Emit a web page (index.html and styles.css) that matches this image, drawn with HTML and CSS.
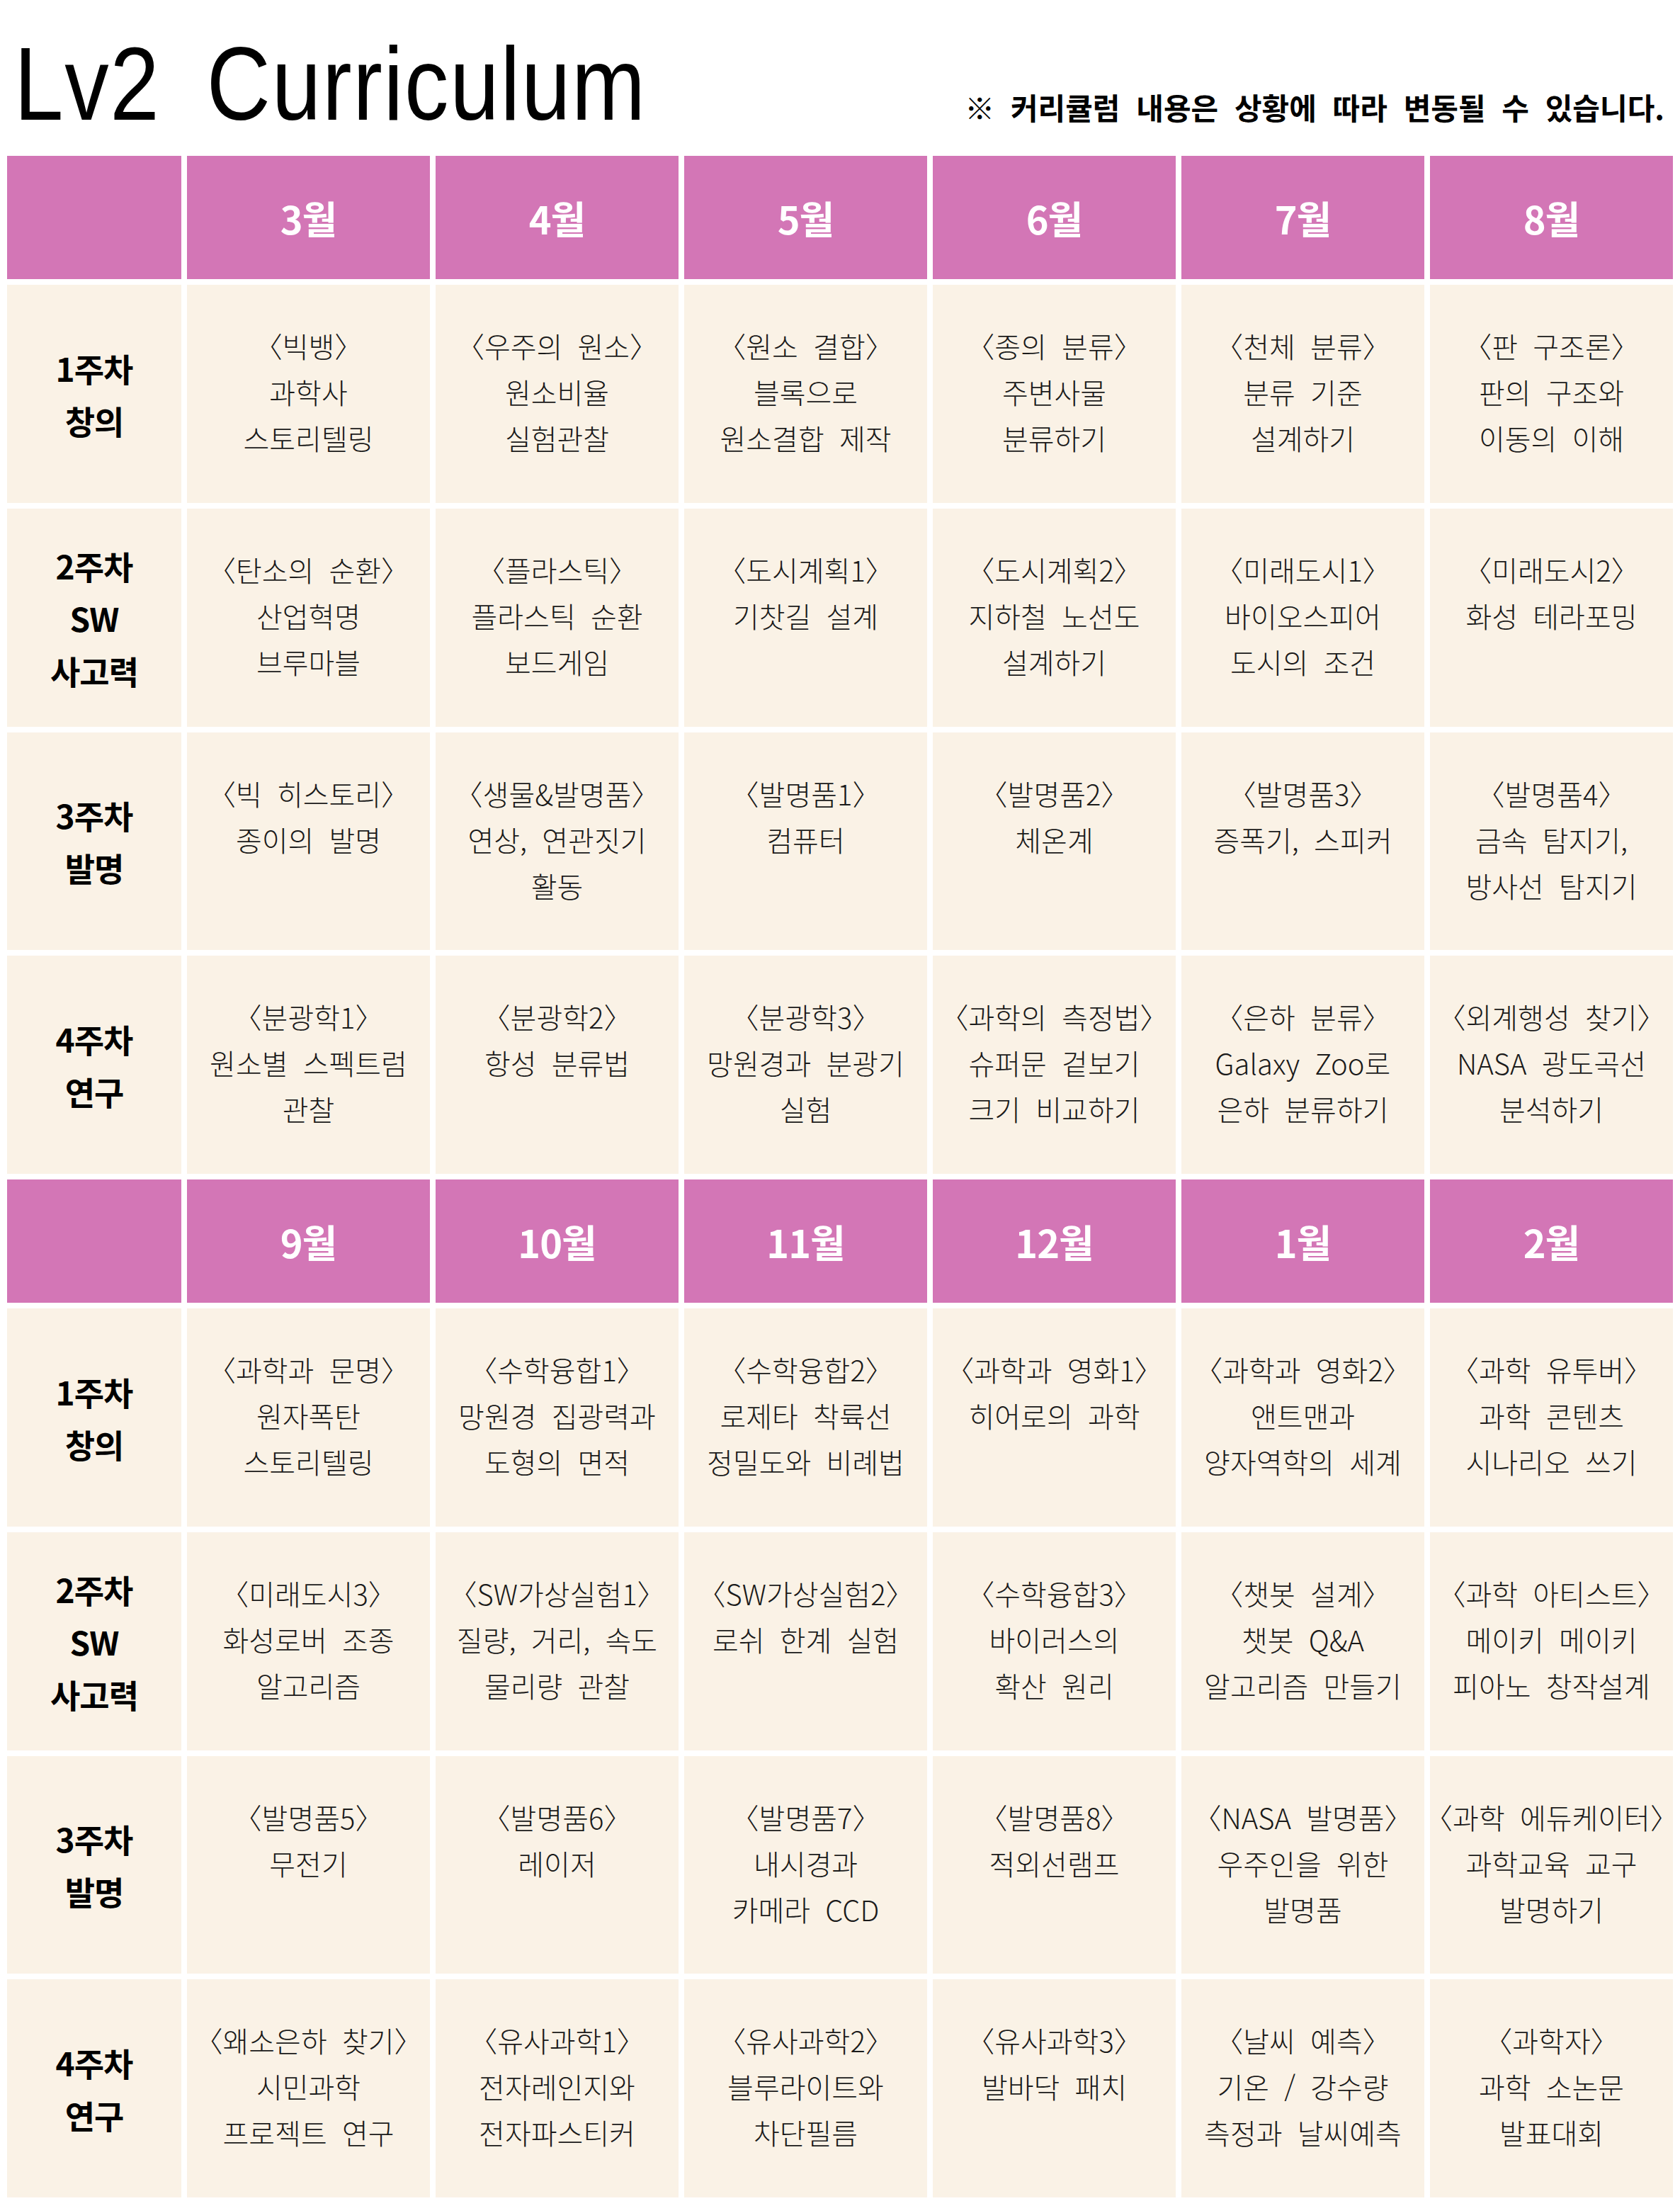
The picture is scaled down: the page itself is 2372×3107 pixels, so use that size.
FILE: index.html
```html
<!DOCTYPE html>
<html lang="ko">
<head>
<meta charset="utf-8">
<title>Lv2 Curriculum</title>
<link rel="stylesheet" href="styles.css">
</head>
<body>
<div class="page">
  <header class="top">
    <h1 class="title">Lv2 Curriculum</h1>
    <p class="note">※ 커리큘럼 내용은 상황에 따라 변동될 수 있습니다.</p>
  </header>
  <div class="grid">
    <div class="head"></div>
    <div class="head">3월</div>
    <div class="head">4월</div>
    <div class="head">5월</div>
    <div class="head">6월</div>
    <div class="head">7월</div>
    <div class="head">8월</div>

    <div class="week">1주차<br>창의</div>
    <div class="cell">〈빅뱅〉<br>과학사<br>스토리텔링</div>
    <div class="cell">〈우주의 원소〉<br>원소비율<br>실험관찰</div>
    <div class="cell">〈원소 결합〉<br>블록으로<br>원소결합 제작</div>
    <div class="cell">〈종의 분류〉<br>주변사물<br>분류하기</div>
    <div class="cell">〈천체 분류〉<br>분류 기준<br>설계하기</div>
    <div class="cell">〈판 구조론〉<br>판의 구조와<br>이동의 이해</div>

    <div class="week">2주차<br>SW<br>사고력</div>
    <div class="cell">〈탄소의 순환〉<br>산업혁명<br>브루마블</div>
    <div class="cell">〈플라스틱〉<br>플라스틱 순환<br>보드게임</div>
    <div class="cell">〈도시계획1〉<br>기찻길 설계</div>
    <div class="cell">〈도시계획2〉<br>지하철 노선도<br>설계하기</div>
    <div class="cell">〈미래도시1〉<br>바이오스피어<br>도시의 조건</div>
    <div class="cell">〈미래도시2〉<br>화성 테라포밍</div>

    <div class="week">3주차<br>발명</div>
    <div class="cell">〈빅 히스토리〉<br>종이의 발명</div>
    <div class="cell">〈생물&amp;발명품〉<br>연상, 연관짓기<br>활동</div>
    <div class="cell">〈발명품1〉<br>컴퓨터</div>
    <div class="cell">〈발명품2〉<br>체온계</div>
    <div class="cell">〈발명품3〉<br>증폭기, 스피커</div>
    <div class="cell">〈발명품4〉<br>금속 탐지기,<br>방사선 탐지기</div>

    <div class="week">4주차<br>연구</div>
    <div class="cell">〈분광학1〉<br>원소별 스펙트럼<br>관찰</div>
    <div class="cell">〈분광학2〉<br>항성 분류법</div>
    <div class="cell">〈분광학3〉<br>망원경과 분광기<br>실험</div>
    <div class="cell">〈과학의 측정법〉<br>슈퍼문 겉보기<br>크기 비교하기</div>
    <div class="cell">〈은하 분류〉<br>Galaxy Zoo로<br>은하 분류하기</div>
    <div class="cell">〈외계행성 찾기〉<br>NASA 광도곡선<br>분석하기</div>

    <div class="head"></div>
    <div class="head">9월</div>
    <div class="head">10월</div>
    <div class="head">11월</div>
    <div class="head">12월</div>
    <div class="head">1월</div>
    <div class="head">2월</div>

    <div class="week">1주차<br>창의</div>
    <div class="cell">〈과학과 문명〉<br>원자폭탄<br>스토리텔링</div>
    <div class="cell">〈수학융합1〉<br>망원경 집광력과<br>도형의 면적</div>
    <div class="cell">〈수학융합2〉<br>로제타 착륙선<br>정밀도와 비례법</div>
    <div class="cell">〈과학과 영화1〉<br>히어로의 과학</div>
    <div class="cell">〈과학과 영화2〉<br>앤트맨과<br>양자역학의 세계</div>
    <div class="cell">〈과학 유투버〉<br>과학 콘텐츠<br>시나리오 쓰기</div>

    <div class="week">2주차<br>SW<br>사고력</div>
    <div class="cell">〈미래도시3〉<br>화성로버 조종<br>알고리즘</div>
    <div class="cell">〈SW가상실험1〉<br>질량, 거리, 속도<br>물리량 관찰</div>
    <div class="cell">〈SW가상실험2〉<br>로쉬 한계 실험</div>
    <div class="cell">〈수학융합3〉<br>바이러스의<br>확산 원리</div>
    <div class="cell">〈챗봇 설계〉<br>챗봇 Q&amp;A<br>알고리즘 만들기</div>
    <div class="cell">〈과학 아티스트〉<br>메이키 메이키<br>피아노 창작설계</div>

    <div class="week">3주차<br>발명</div>
    <div class="cell">〈발명품5〉<br>무전기</div>
    <div class="cell">〈발명품6〉<br>레이저</div>
    <div class="cell">〈발명품7〉<br>내시경과<br>카메라 CCD</div>
    <div class="cell">〈발명품8〉<br>적외선램프</div>
    <div class="cell">〈NASA 발명품〉<br>우주인을 위한<br>발명품</div>
    <div class="cell">〈과학 에듀케이터〉<br>과학교육 교구<br>발명하기</div>

    <div class="week">4주차<br>연구</div>
    <div class="cell">〈왜소은하 찾기〉<br>시민과학<br>프로젝트 연구</div>
    <div class="cell">〈유사과학1〉<br>전자레인지와<br>전자파스티커</div>
    <div class="cell">〈유사과학2〉<br>블루라이트와<br>차단필름</div>
    <div class="cell">〈유사과학3〉<br>발바닥 패치</div>
    <div class="cell">〈날씨 예측〉<br>기온 / 강수량<br>측정과 날씨예측</div>
    <div class="cell">〈과학자〉<br>과학 소논문<br>발표대회</div>
  </div>
</div>
</body>
</html>
```

FILE: styles.css
```css
html, body {
  margin: 0;
  padding: 0;
  background: #ffffff;
}

.page {
  width: 2372px;
  padding: 0 10px;
  box-sizing: border-box;
}

.top {
  display: flex;
  justify-content: space-between;
  align-items: baseline;
  height: 220px;
  padding: 45px 12px 0 10px;
  box-sizing: border-box;
}

.title {
  margin: 0;
  font-family: "Liberation Sans", Arial, sans-serif;
  font-weight: 400;
  font-size: 147px;
  line-height: 147px;
  letter-spacing: 2px;
  word-spacing: 34px;
  color: #000;
  white-space: nowrap;
  transform: scaleX(0.85);
  transform-origin: left center;
}

.note {
  margin: 0;
  font-family: "Noto Sans CJK KR", "Noto Sans", sans-serif;
  font-weight: 700;
  font-size: 42px;
  word-spacing: 11px;
  color: #000;
}

.grid {
  display: grid;
  grid-template-columns: 246px repeat(6, 343px);
  grid-template-rows: 174px repeat(4, 307.75px) 174px repeat(4, 307.75px);
  gap: 8px;
}

.head {
  background: #d376b6;
  color: #ffffff;
  display: flex;
  align-items: center;
  justify-content: center;
  font-family: "Noto Sans CJK KR", "Noto Sans", sans-serif;
  font-weight: 700;
  font-size: 54px;
  letter-spacing: -1px;
}

.week {
  background: #faf2e6;
  display: flex;
  align-items: center;
  justify-content: center;
  text-align: center;
  font-family: "Noto Sans CJK KR", "Noto Sans", sans-serif;
  font-weight: 700;
  font-size: 46px;
  line-height: 74px;
  letter-spacing: -1px;
  color: #000;
}

.cell {
  background: #faf2e6;
  display: flex;
  align-items: flex-start;
  justify-content: center;
  text-align: center;
  white-space: nowrap;
  padding-top: 54px;
  box-sizing: border-box;
  font-family: "Noto Sans CJK KR", "Noto Sans", sans-serif;
  font-weight: 200;
  font-size: 40px;
  line-height: 65px;
  word-spacing: 10px;
  font-feature-settings: "halt" 1;
  color: #1a1a1a;
}
```
